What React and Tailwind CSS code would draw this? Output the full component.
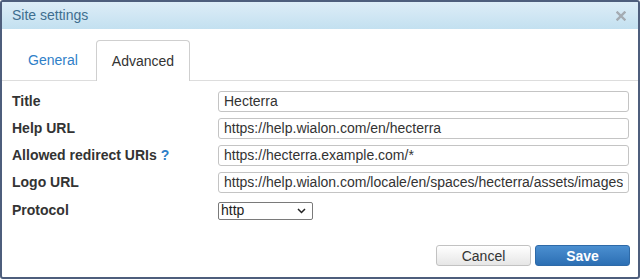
import React from 'react'

const FIELDS = [
  { label: 'Title', value: 'Hecterra' },
  { label: 'Help URL', value: 'https://help.wialon.com/en/hecterra' },
  { label: 'Allowed redirect URIs', value: 'https://hecterra.example.com/*', hint: true },
  { label: 'Logo URL', value: 'https://help.wialon.com/locale/en/spaces/hecterra/assets/images/logo.png' },
]

function CloseIcon() {
  return (
    <svg width="10" height="10" viewBox="0 0 10 10" className="block">
      <path d="M1.5 1.5 L8.5 8.5 M8.5 1.5 L1.5 8.5" stroke="#a4abb2" strokeWidth="2.4" strokeLinecap="square" />
    </svg>
  )
}

export default function App() {
  return (
    <div className="w-[642px] h-[279px] bg-white font-['Liberation_Sans',Arial,sans-serif] text-[#333]">
      <div className="w-[640px] h-[279px] border-2 border-[#4e5e7c] rounded-[3px] flex flex-col overflow-hidden">
        <div className="h-[27px] shrink-0 bg-gradient-to-b from-[#ddedf7] to-[#c3e0f0] flex items-center justify-between pl-[10px] pr-[12px]">
          <span className="text-[14px] text-[#3e6e8f]">Site settings</span>
          <CloseIcon />
        </div>

        <div className="pt-[11px] pl-[11px] border-b border-[#dddddd] flex items-end gap-[3px]">
          <button type="button" className="h-[40px] px-[15px] text-[14px] text-[#2f80c8]">
            General
          </button>
          <button
            type="button"
            className="h-[41px] -mb-px px-[15px] text-[14px] text-[#333] bg-white border border-b-0 border-[#cfcfcf] rounded-t-[4px]"
          >
            Advanced
          </button>
        </div>

        <div className="pt-[10px] pl-[10px] pr-[9px] flex flex-col gap-[6px]">
          {FIELDS.map((f) => (
            <div key={f.label} className="flex items-center">
              <label className="w-[206px] shrink-0 text-[14px] font-bold text-[#333]">
                {f.label}
                {f.hint && <span className="ml-[4px] text-[#2f80c8]">?</span>}
              </label>
              <input
                readOnly
                value={f.value}
                className="flex-1 min-w-0 h-[21px] border border-[#c4c4c4] rounded-[3px] px-[5px] text-[14px] text-[#333] outline-none bg-white"
              />
            </div>
          ))}
          <div className="flex items-center mt-[1px]">
            <label className="w-[206px] shrink-0 text-[14px] font-bold text-[#333]">Protocol</label>
            <div className="w-[95px] h-[18px] border border-[#7a7a7a] rounded-[2px] flex items-center justify-between pl-[2px] pr-[6px] text-[14px] text-[#222] bg-white">
              <span>http</span>
              <svg width="9" height="6" viewBox="0 0 9 6">
                <path d="M1 1 L4.5 4.5 L8 1" fill="none" stroke="#222" strokeWidth="1.5" />
              </svg>
            </div>
          </div>
        </div>

        <div className="mt-auto mb-[11px] pr-[8px] flex justify-end gap-[4px]">
          <button
            type="button"
            className="w-[95px] h-[21px] rounded-[3px] border border-[#c2c2c2] bg-gradient-to-b from-[#ffffff] to-[#e6e6e6] text-[14px] text-[#333]"
          >
            Cancel
          </button>
          <button
            type="button"
            className="w-[95px] h-[21px] rounded-[3px] border border-[#2e6aa8] bg-gradient-to-b from-[#4b8fd0] to-[#2c6fb4] text-[14px] font-bold text-white"
          >
            Save
          </button>
        </div>
      </div>
    </div>
  )
}
